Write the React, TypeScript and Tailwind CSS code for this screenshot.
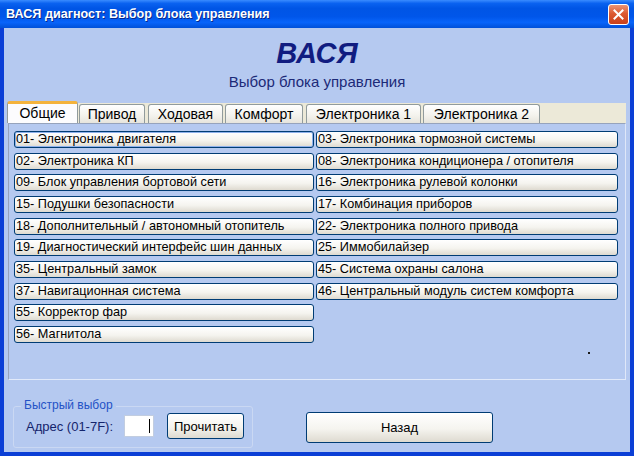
import React from "react";

const left = [
  "01- Электроника двигателя",
  "02- Электроника КП",
  "09- Блок управления бортовой сети",
  "15- Подушки безопасности",
  "18- Дополнительный / автономный отопитель",
  "19- Диагностический интерфейс шин данных",
  "35- Центральный замок",
  "37- Навигационная система",
  "55- Корректор фар",
  "56- Магнитола",
];

const right = [
  "03- Электроника тормозной системы",
  "08- Электроника кондиционера / отопителя",
  "16- Электроника рулевой колонки",
  "17- Комбинация приборов",
  "22- Электроника полного привода",
  "25- Иммобилайзер",
  "45- Система охраны салона",
  "46- Центральный модуль систем комфорта",
];

const tabs = [
  { label: "Общие", cls: "w-[71px]" },
  { label: "Привод", cls: "ml-[1px] w-[66px]" },
  { label: "Ходовая", cls: "ml-[3px] w-[75px]" },
  { label: "Комфорт", cls: "ml-[2px] w-[78px]" },
  { label: "Электроника 1", cls: "ml-[3px] w-[115px]" },
  { label: "Электроника 2", cls: "ml-[2px] w-[117px]" },
];

const xpButton =
  "rounded-[3px] border border-[#003c74] bg-[linear-gradient(to_bottom,#ffffff,#f5f4ef_55%,#dedad0)] text-black";

function ModuleButton({ label, focused }: { label: string; focused?: boolean }) {
  return (
    <button
      className={`${xpButton} h-[17px] pl-[1px] text-left text-[12.7px] leading-[15px] ${
        focused ? "shadow-[inset_0_0_0_1px_#8fb1ec]" : ""
      }`}
    >
      {label}
    </button>
  );
}

export default function App() {
  return (
    <div className="flex h-[456px] w-[634px] flex-col overflow-hidden bg-[#0b3fd6] font-['Liberation_Sans',Arial,sans-serif]">
      {/* Title bar */}
      <div className="flex h-[28px] shrink-0 items-center justify-between bg-[linear-gradient(to_bottom,#3a8cff_0%,#0a62f0_12%,#0055e5_30%,#0056ea_60%,#0864fa_80%,#0050d8_100%)] pl-[6px] pr-[5px]">
        <span className="text-[12.6px] font-bold text-white [text-shadow:1px_1px_#0b2a8a]">
          ВАСЯ диагност: Выбор блока управления
        </span>
        <div className="flex h-[21px] w-[21px] items-center justify-center rounded-[3px] border border-white bg-[linear-gradient(to_bottom,#ec9474,#dc5a32_45%,#c9401a)]">
          <svg width="11" height="11" viewBox="0 0 11 11">
            <path d="M1.5 1.5 L9.5 9.5 M9.5 1.5 L1.5 9.5" stroke="white" strokeWidth="2" strokeLinecap="square" />
          </svg>
        </div>
      </div>

      {/* Client area */}
      <div className="mx-[4px] mb-[4px] flex flex-1 flex-col bg-[#b5c9f0]">
        <div className="pt-[11px] text-center text-[29px] font-bold italic leading-[28px] text-[#111c80]">
          ВАСЯ
        </div>
        <div className="mt-[7px] text-center text-[15px] leading-[15px] text-[#1c2a78]">
          Выбор блока управления
        </div>

        {/* Tabs */}
        <div className="mt-[12px] ml-[3px] mr-[4px] flex h-[22px] items-end bg-[linear-gradient(to_bottom,transparent_2px,#ece9d8_2px)]">
          {tabs.map((t, i) =>
            i === 0 ? (
              <div
                key={t.label}
                className={`${t.cls} flex h-[22px] items-center justify-center rounded-t-[3px] border-x border-[#919b9c] border-t-[3px] border-t-[#f4b33c] bg-[#fcfcfe] text-[14px] text-black`}
              >
                {t.label}
              </div>
            ) : (
              <div
                key={t.label}
                className={`${t.cls} flex h-[19px] items-center justify-center rounded-t-[3px] border-x border-t border-[#919b9c] bg-[linear-gradient(to_bottom,#ffffff,#f3f2ec_60%,#e6e4dc)] text-[14px] text-black`}
              >
                {t.label}
              </div>
            )
          )}
          <div className="flex-1" />
        </div>

        {/* Tab panel */}
        <div className="relative mx-[4px] h-[257px] border border-[#96a3bc] border-b-[#e2eafa] border-r-[#dfe7f8] pl-[5px] pt-[7px]">
          <div className="grid grid-cols-[300px_302px] gap-x-[2px]">
            <div className="flex flex-col gap-[4.67px]">
              {left.map((l, i) => (
                <ModuleButton key={l} label={l} focused={i === 0} />
              ))}
            </div>
            <div className="flex flex-col gap-[4.67px]">
              {right.map((l) => (
                <ModuleButton key={l} label={l} />
              ))}
            </div>
          </div>
          <span className="absolute left-[579px] top-[228px] h-[2px] w-[2px] bg-[#1a1a1a]" />
        </div>

        {/* Bottom */}
        <div className="flex flex-1 items-start pl-[9px]">
          <div className="mt-[26px] h-[42px] w-[240px] rounded-[3px] border border-[#cad8f3]">
            <div className="-mt-[8.6px] ml-[7px] w-fit bg-[#b5c9f0] px-[3px] text-[12px] leading-[14px] text-[#2452c6]">
              Быстрый выбор
            </div>
            <div className="mt-[1px] flex items-center pl-[12px]">
              <span className="w-[98px] text-[13px] text-[#14246c]">Адрес (01-7F):</span>
              <div className="flex h-[22px] w-[30px] items-center justify-end border border-[#c2cde0] bg-white pr-[3px]">
                <span className="h-[14px] w-[1px] bg-black" />
              </div>
              <button className={`${xpButton} ml-[13px] h-[26px] w-[77px] text-[13px]`}>Прочитать</button>
            </div>
          </div>
          <button className={`${xpButton} ml-[53px] mt-[32px] h-[31px] w-[187px] text-[13px]`}>Назад</button>
        </div>
      </div>
    </div>
  );
}
